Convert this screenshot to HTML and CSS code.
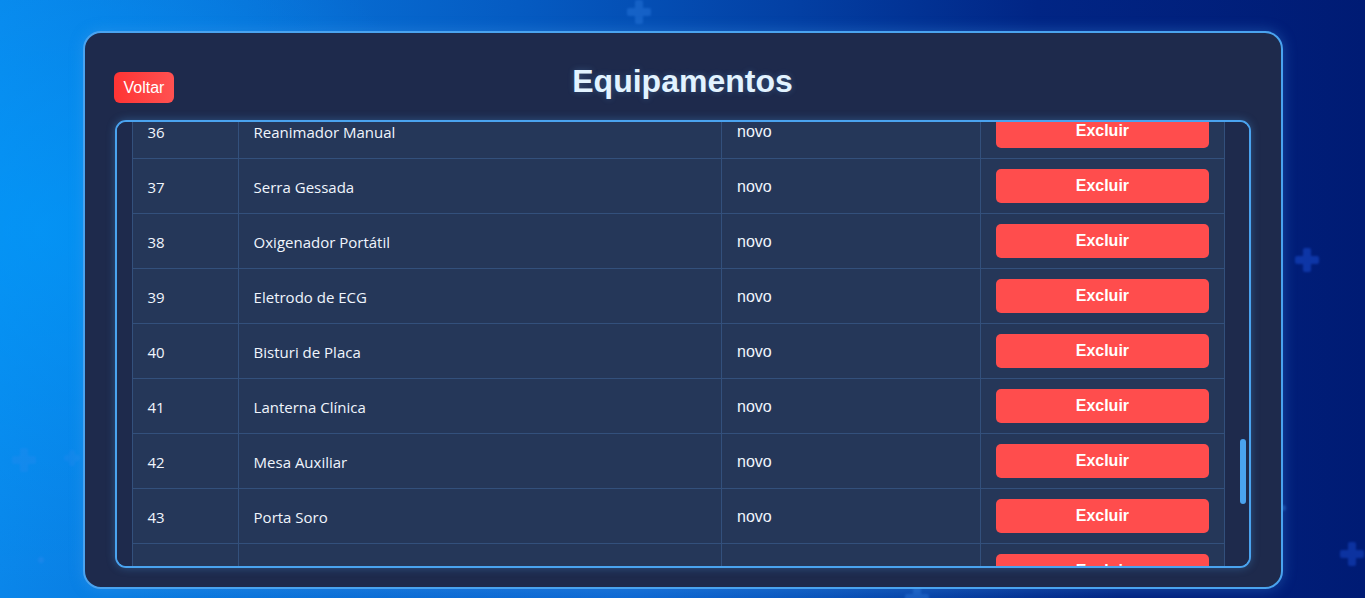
FILE: index.html
```html
<!DOCTYPE html>
<html lang="pt-BR">
<head>
<meta charset="utf-8">
<title>Equipamentos</title>
<link rel="stylesheet" href="styles.css">
</head>
<body>
<div class="bg-deco" aria-hidden="true">
  <span class="plus p1"></span>
  <span class="plus p2"></span>
  <span class="plus p3"></span>
  <span class="plus p4"></span>
  <span class="plus p5"></span>
  <span class="plus p6"></span>
  <span class="plus p7"></span>
  <span class="dot d1"></span>
  <span class="dot d2"></span>
</div>
<main class="card">
  <header class="card-header">
    <button class="btn-back" type="button">Voltar</button>
    <h2 class="title">Equipamentos</h2>
    <span></span>
  </header>
  <div class="table-frame">
    <div class="table-wrap" id="scroller">
      <table class="table">
        <colgroup><col class="c-id"><col class="c-name"><col class="c-state"><col class="c-act"></colgroup>
        <tbody>
          <tr><td>1</td><td class="name">Estetoscópio</td><td class="state">novo</td><td class="act"><button class="btn-del" type="button">Excluir</button></td></tr>
          <tr><td>2</td><td class="name">Termômetro Digital</td><td class="state">novo</td><td class="act"><button class="btn-del" type="button">Excluir</button></td></tr>
          <tr><td>3</td><td class="name">Esfigmomanômetro</td><td class="state">novo</td><td class="act"><button class="btn-del" type="button">Excluir</button></td></tr>
          <tr><td>4</td><td class="name">Oxímetro de Pulso</td><td class="state">novo</td><td class="act"><button class="btn-del" type="button">Excluir</button></td></tr>
          <tr><td>5</td><td class="name">Desfibrilador</td><td class="state">novo</td><td class="act"><button class="btn-del" type="button">Excluir</button></td></tr>
          <tr><td>6</td><td class="name">Maca Hospitalar</td><td class="state">novo</td><td class="act"><button class="btn-del" type="button">Excluir</button></td></tr>
          <tr><td>7</td><td class="name">Cadeira de Rodas</td><td class="state">novo</td><td class="act"><button class="btn-del" type="button">Excluir</button></td></tr>
          <tr><td>8</td><td class="name">Nebulizador</td><td class="state">novo</td><td class="act"><button class="btn-del" type="button">Excluir</button></td></tr>
          <tr><td>9</td><td class="name">Glicosímetro</td><td class="state">novo</td><td class="act"><button class="btn-del" type="button">Excluir</button></td></tr>
          <tr><td>10</td><td class="name">Monitor Cardíaco</td><td class="state">novo</td><td class="act"><button class="btn-del" type="button">Excluir</button></td></tr>
          <tr><td>11</td><td class="name">Bomba de Infusão</td><td class="state">novo</td><td class="act"><button class="btn-del" type="button">Excluir</button></td></tr>
          <tr><td>12</td><td class="name">Ventilador Pulmonar</td><td class="state">novo</td><td class="act"><button class="btn-del" type="button">Excluir</button></td></tr>
          <tr><td>13</td><td class="name">Eletrocardiógrafo</td><td class="state">novo</td><td class="act"><button class="btn-del" type="button">Excluir</button></td></tr>
          <tr><td>14</td><td class="name">Aspirador Cirúrgico</td><td class="state">novo</td><td class="act"><button class="btn-del" type="button">Excluir</button></td></tr>
          <tr><td>15</td><td class="name">Autoclave</td><td class="state">novo</td><td class="act"><button class="btn-del" type="button">Excluir</button></td></tr>
          <tr><td>16</td><td class="name">Foco Cirúrgico</td><td class="state">novo</td><td class="act"><button class="btn-del" type="button">Excluir</button></td></tr>
          <tr><td>17</td><td class="name">Bisturi Elétrico</td><td class="state">novo</td><td class="act"><button class="btn-del" type="button">Excluir</button></td></tr>
          <tr><td>18</td><td class="name">Laringoscópio</td><td class="state">novo</td><td class="act"><button class="btn-del" type="button">Excluir</button></td></tr>
          <tr><td>19</td><td class="name">Otoscópio</td><td class="state">novo</td><td class="act"><button class="btn-del" type="button">Excluir</button></td></tr>
          <tr><td>20</td><td class="name">Balança Antropométrica</td><td class="state">novo</td><td class="act"><button class="btn-del" type="button">Excluir</button></td></tr>
          <tr><td>21</td><td class="name">Incubadora Neonatal</td><td class="state">novo</td><td class="act"><button class="btn-del" type="button">Excluir</button></td></tr>
          <tr><td>22</td><td class="name">Cama Hospitalar</td><td class="state">novo</td><td class="act"><button class="btn-del" type="button">Excluir</button></td></tr>
          <tr><td>23</td><td class="name">Negatoscópio</td><td class="state">novo</td><td class="act"><button class="btn-del" type="button">Excluir</button></td></tr>
          <tr><td>24</td><td class="name">Cilindro de Oxigênio</td><td class="state">novo</td><td class="act"><button class="btn-del" type="button">Excluir</button></td></tr>
          <tr><td>25</td><td class="name">Carrinho de Emergência</td><td class="state">novo</td><td class="act"><button class="btn-del" type="button">Excluir</button></td></tr>
          <tr><td>26</td><td class="name">Oftalmoscópio</td><td class="state">novo</td><td class="act"><button class="btn-del" type="button">Excluir</button></td></tr>
          <tr><td>27</td><td class="name">Colar Cervical</td><td class="state">novo</td><td class="act"><button class="btn-del" type="button">Excluir</button></td></tr>
          <tr><td>28</td><td class="name">Prancha Rígida</td><td class="state">novo</td><td class="act"><button class="btn-del" type="button">Excluir</button></td></tr>
          <tr><td>29</td><td class="name">Tala Moldável</td><td class="state">novo</td><td class="act"><button class="btn-del" type="button">Excluir</button></td></tr>
          <tr><td>30</td><td class="name">Pinça Hemostática</td><td class="state">novo</td><td class="act"><button class="btn-del" type="button">Excluir</button></td></tr>
          <tr><td>31</td><td class="name">Tesoura Cirúrgica</td><td class="state">novo</td><td class="act"><button class="btn-del" type="button">Excluir</button></td></tr>
          <tr><td>32</td><td class="name">Porta Agulha</td><td class="state">novo</td><td class="act"><button class="btn-del" type="button">Excluir</button></td></tr>
          <tr><td>33</td><td class="name">Afastador Cirúrgico</td><td class="state">novo</td><td class="act"><button class="btn-del" type="button">Excluir</button></td></tr>
          <tr><td>34</td><td class="name">Cuba Rim</td><td class="state">novo</td><td class="act"><button class="btn-del" type="button">Excluir</button></td></tr>
          <tr><td>35</td><td class="name">Ambu Adulto</td><td class="state">novo</td><td class="act"><button class="btn-del" type="button">Excluir</button></td></tr>
          <tr id="row36"><td>36</td><td class="name">Reanimador Manual</td><td class="state">novo</td><td class="act"><button class="btn-del" type="button">Excluir</button></td></tr>
          <tr><td>37</td><td class="name">Serra Gessada</td><td class="state">novo</td><td class="act"><button class="btn-del" type="button">Excluir</button></td></tr>
          <tr><td>38</td><td class="name">Oxigenador Portátil</td><td class="state">novo</td><td class="act"><button class="btn-del" type="button">Excluir</button></td></tr>
          <tr><td>39</td><td class="name">Eletrodo de ECG</td><td class="state">novo</td><td class="act"><button class="btn-del" type="button">Excluir</button></td></tr>
          <tr><td>40</td><td class="name">Bisturi de Placa</td><td class="state">novo</td><td class="act"><button class="btn-del" type="button">Excluir</button></td></tr>
          <tr><td>41</td><td class="name">Lanterna Clínica</td><td class="state">novo</td><td class="act"><button class="btn-del" type="button">Excluir</button></td></tr>
          <tr><td>42</td><td class="name">Mesa Auxiliar</td><td class="state">novo</td><td class="act"><button class="btn-del" type="button">Excluir</button></td></tr>
          <tr><td>43</td><td class="name">Porta Soro</td><td class="state">novo</td><td class="act"><button class="btn-del" type="button">Excluir</button></td></tr>
          <tr><td>44</td><td class="name">Cadeira de Banho Infantil</td><td class="state">novo</td><td class="act"><button class="btn-del" type="button">Excluir</button></td></tr>
          <tr><td>45</td><td class="name">Biombo Hospitalar</td><td class="state">novo</td><td class="act"><button class="btn-del" type="button">Excluir</button></td></tr>
          <tr><td>46</td><td class="name">Escada de Dois Degraus</td><td class="state">novo</td><td class="act"><button class="btn-del" type="button">Excluir</button></td></tr>
          <tr><td>47</td><td class="name">Suporte de Soro</td><td class="state">novo</td><td class="act"><button class="btn-del" type="button">Excluir</button></td></tr>
          <tr><td>48</td><td class="name">Detector Fetal</td><td class="state">novo</td><td class="act"><button class="btn-del" type="button">Excluir</button></td></tr>
          <tr><td>49</td><td class="name">Andador Articulado</td><td class="state">novo</td><td class="act"><button class="btn-del" type="button">Excluir</button></td></tr>
          <tr><td>50</td><td class="name">Muleta Axilar</td><td class="state">novo</td><td class="act"><button class="btn-del" type="button">Excluir</button></td></tr>
        </tbody>
      </table>
    </div>
    <span class="scroll-thumb" aria-hidden="true"></span>
  </div>
</main>
<script src="script.js"></script>
</body>
</html>
```

FILE: styles.css
```css
* { box-sizing: border-box; }

html, body { height: 100%; }

body {
  margin: 0;
  overflow: hidden;
  position: relative;
  font-family: "Liberation Sans", Arial, sans-serif;
  background:
    radial-gradient(ellipse 420px 360px at 40px 230px, rgba(0, 160, 255, 0.55), rgba(0, 160, 255, 0) 100%),
    radial-gradient(ellipse 500px 160px at 620px 600px, rgba(20, 120, 230, 0.6), rgba(20, 120, 230, 0) 100%),
    linear-gradient(90deg, #0a86ea 0%, #0873d9 18%, #055bc2 38%, #0340a4 58%, #012585 76%, #001b74 100%);
  padding-top: 31px;
}

/* decorative background crosses */
.bg-deco { position: absolute; inset: 0; pointer-events: none; }
.plus { position: absolute; width: 24px; height: 24px; opacity: 0.35; filter: blur(1px); }
.plus::before, .plus::after { content: ""; position: absolute; background: #3c8cf0; border-radius: 2px; }
.plus::before { left: 8px; top: 0; width: 8px; height: 24px; }
.plus::after { left: 0; top: 8px; width: 24px; height: 8px; }
.p1 { left: 627px; top: 0; opacity: 0.3; }
.p2 { left: 1295px; top: 248px; opacity: 0.5; }
.p2::before, .p2::after { background: #1b4fd6; }
.p3 { left: 12px; top: 448px; opacity: 0.22; }
.p4 { left: 64px; top: 450px; width: 16px; height: 16px; opacity: 0.2; }
.p4::before { left: 5px; width: 6px; height: 16px; }
.p4::after { top: 5px; width: 16px; height: 6px; }
.p5 { left: 1340px; top: 542px; opacity: 0.45; }
.p5::before, .p5::after { background: #1b4fd6; }
.p6 { left: 1268px; top: 500px; width: 14px; height: 14px; opacity: 0.25; }
.p6::before { left: 5px; width: 4px; height: 14px; }
.p6::after { top: 5px; width: 14px; height: 4px; }
.p7 { left: 905px; top: 586px; width: 60px; height: 40px; opacity: 0.3; }
.dot { position: absolute; width: 6px; height: 6px; border-radius: 50%; background: #3c8cf0; opacity: 0.3; filter: blur(1px); }
.d1 { left: 38px; top: 557px; }
.d2 { left: 1280px; top: 505px; }

/* card */
.card {
  position: relative;
  width: 1200px;
  margin: 0 auto;
  padding: 30px 30px 19px;
  background: #1e2a4c;
  border: 2px solid #4aa3ef;
  border-radius: 18px;
  box-shadow: 0 0 14px rgba(74, 163, 239, 0.35);
}

.card-header {
  display: grid;
  grid-template-columns: 1fr auto 1fr;
  align-items: start;
  height: 37px;
  margin-bottom: 20px;
}

.btn-back {
  justify-self: start;
  margin-top: 9px;
  margin-left: -1px;
  padding: 6px 10px;
  font-family: "Liberation Sans", Arial, sans-serif;
  font-size: 16px;
  line-height: 19px;
  color: #ffffff;
  background: linear-gradient(90deg, #ff3434, #ff5151);
  border: 0;
  border-radius: 6px;
}

.title {
  margin: 0;
  font-family: "Liberation Sans", Arial, sans-serif;
  font-size: 32px;
  font-weight: 700;
  line-height: 37px;
  color: #e2f3ff;
  text-shadow: 0 0 6px rgba(120, 190, 255, 0.25);
}

/* scrollable table area */
.table-frame { position: relative; }

.table-wrap {
  height: 448px;
  overflow-y: auto;
  scrollbar-width: none;
  padding: 0 24px 0 15px;
  background: #1e2a4c;
  border: 2px solid #4aa3ef;
  border-radius: 11px;
  box-shadow: 0 0 8px rgba(74, 163, 239, 0.35);
}

.scroll-thumb {
  position: absolute;
  left: 1125px;
  top: 319px;
  width: 6px;
  height: 65px;
  border-radius: 3px;
  background: #4aa3ef;
}

.table {
  width: 100%;
  table-layout: fixed;
  border-collapse: collapse;
  background: #253759;
}
.c-id { width: 106px; }
.c-name { width: 483px; }
.c-state { width: 259px; }
.c-act { width: 243px; }

.table tr { height: 55px; }

.table td {
  padding: 2px 15px 0;
  border: 1px solid #33507c;
  text-align: left;
  vertical-align: middle;
  color: #f0f5fd;
  font-family: "Open Sans", "Noto Sans", sans-serif;
  font-size: 15px;
  font-weight: 400;
}

.table td.state {
  font-family: "Liberation Sans", Arial, sans-serif;
  font-size: 16px;
}

.table td.act { padding: 0 15px; }

.btn-del {
  display: block;
  width: 100%;
  padding: 8px 0;
  font-family: "Liberation Sans", Arial, sans-serif;
  font-size: 16px;
  font-weight: 700;
  line-height: 18px;
  color: #ffffff;
  background: #ff4d4d;
  border: 0;
  border-radius: 5px;
}
```

FILE: script.js
```js
(function () {
  var scroller = document.getElementById('scroller');
  var row = document.getElementById('row36');
  var target = 104;
  var delta = row.getBoundingClientRect().top - target;
  scroller.scrollTop = scroller.scrollTop + delta;
})();
```
